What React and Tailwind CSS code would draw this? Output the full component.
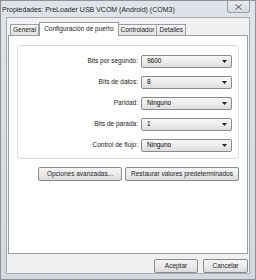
import React from "react";

const font = { fontFamily: '"Liberation Sans", Arial, sans-serif' };

function Combo({ value }) {
  return (
    <div className="flex h-[13px] w-[91px] items-center justify-between rounded-[2px] border border-[#8a8a8a] bg-gradient-to-b from-[#f6f6f6] via-[#ececec] to-[#dcdcdc] pl-[5px] pr-[4px] text-[6.5px] leading-none text-black">
      <span>{value}</span>
      <svg width="5" height="3" viewBox="0 0 5 3">
        <path d="M0 0H5L2.5 3Z" fill="#222" />
      </svg>
    </div>
  );
}

function Row({ label, value }) {
  return (
    <div className="flex items-center justify-end gap-[3px]">
      <span className="text-[6.5px] leading-none text-[#222]">{label}</span>
      <Combo value={value} />
    </div>
  );
}

function Btn({ children, w }) {
  return (
    <div
      className={`flex h-[14px] ${w} items-center justify-center rounded-[2px] border border-[#8a8a8a] bg-gradient-to-b from-[#f4f4f4] via-[#ebebeb] to-[#dadada] text-[6.5px] leading-none text-[#222]`}
    >
      {children}
    </div>
  );
}

export default function App() {
  return (
    <div
      style={font}
      className="flex h-[280px] w-[256px] flex-col border border-[#8e9296] bg-gradient-to-b from-[#dfe4ea] to-[#d3d8de]"
    >
      <div className="flex h-[16px] items-start justify-between">
        <span className="ml-[1px] mt-[5px] text-[7px] leading-none text-[#1e1e1e]">
          Propiedades: PreLoader USB VCOM (Android) (COM3)
        </span>
        <div className="mr-[5px] flex h-[12px] w-[23px] items-center justify-center rounded-b-[3px] border border-t-0 border-[#9aa0a8] bg-gradient-to-b from-[#e8ebef] to-[#d6dbe1]">
          <svg width="7" height="6" viewBox="0 0 7 6">
            <path d="M0.5 0.5L6.5 5.5M6.5 0.5L0.5 5.5" stroke="#555" strokeWidth="1" fill="none" />
          </svg>
        </div>
      </div>
      <div className="mx-[5px] mb-[5px] flex flex-1 flex-col border border-[#a8adb3] bg-[#f0f0f0] px-[1px]">
        <div className="mt-[3px] flex h-[14px] items-end pl-[2px]">
          <div className="flex h-[11px] items-center border border-b-0 border-[#989ca3] bg-gradient-to-b from-[#f4f4f4] to-[#e4e4e4] px-[2px] text-[6.5px] leading-none text-[#222]">
            General
          </div>
          <div className="relative z-10 -mb-[1px] flex h-[14px] items-center border border-b-0 border-[#989ca3] bg-white px-[4px] text-[6.5px] leading-none text-[#222]">
            Configuración de puerto
          </div>
          <div className="flex h-[11px] items-center border border-b-0 border-l-0 border-[#989ca3] bg-gradient-to-b from-[#f4f4f4] to-[#e4e4e4] px-[2px] text-[6.5px] leading-none text-[#222]">
            Controlador
          </div>
          <div className="flex h-[11px] items-center border border-b-0 border-l-0 border-[#989ca3] bg-gradient-to-b from-[#f4f4f4] to-[#e4e4e4] px-[2px] text-[6.5px] leading-none text-[#222]">
            Detalles
          </div>
        </div>
        <div className="flex h-[219px] flex-col border border-[#989ca3] bg-white px-[8px] pt-[9px]">
          <div className="flex h-[114px] flex-col gap-[8px] rounded-[3px] border border-[#d6dde3] pr-[6px] pt-[9px]">
            <Row label="Bits por segundo:" value="9600" />
            <Row label="Bits de datos:" value="8" />
            <Row label="Paridad:" value="Ninguno" />
            <Row label="Bits de parada:" value="1" />
            <Row label="Control de flujo:" value="Ninguno" />
          </div>
          <div className="mt-[8px] flex justify-end gap-[3px]">
            <Btn w="w-[84px]">Opciones avanzadas...</Btn>
            <Btn w="w-[114px]">Restaurar valores predeterminados</Btn>
          </div>
        </div>
        <div className="mt-[5px] flex justify-end gap-[5px]">
          <Btn w="w-[44px]">Aceptar</Btn>
          <Btn w="w-[45px]">Cancelar</Btn>
        </div>
      </div>
    </div>
  );
}
